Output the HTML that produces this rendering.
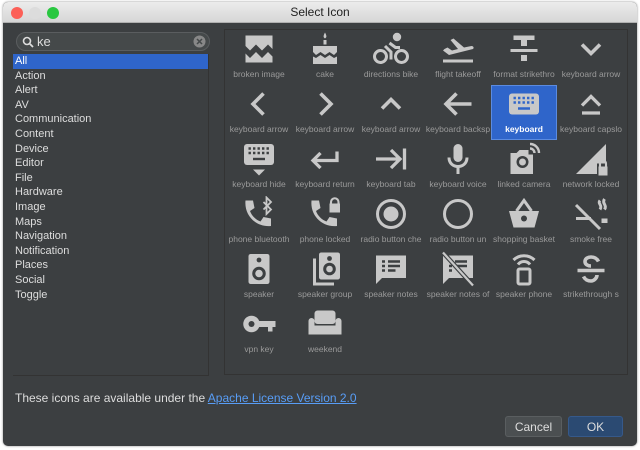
<!DOCTYPE html>
<html><head><meta charset="utf-8"><style>
*{margin:0;padding:0;box-sizing:border-box}
body{width:640px;height:450px;background:#fff;position:relative;overflow:hidden;font-family:"Liberation Sans",sans-serif}
.win{position:absolute;left:3px;top:2px;width:634px;height:444px;background:#3c3f41;border-radius:5px;overflow:hidden;box-shadow:0 0 2px #888}
.title{height:21px;background:linear-gradient(#ececec,#d6d6d6);border-bottom:1px solid #b0b0b0;text-align:center;font-size:12px;line-height:21px;color:#222}
.dot{position:absolute;top:5px;width:12px;height:12px;border-radius:50%}
.search{position:absolute;left:13px;top:30px;width:194px;height:19px;border:1px solid #5a5d5f;border-radius:10px;background:#45494a;color:#ddd;font-size:13px;line-height:17px;padding-left:20px}
.list{position:absolute;left:10px;top:52px;width:196px;height:322px;background:#3c3f41;border-right:1px solid #333;border-bottom:1px solid #333}
.list div{height:14.6px;font-size:11px;line-height:14.6px;color:#ddd;padding-left:2px}
.list .sel{background:#2f65ca;color:#fff}
.grid{position:absolute;left:221px;top:27px;width:404px;height:346px;border:1px solid #333;background:#3c3f41}
.cell{position:absolute;width:66px;height:55px;text-align:center}
.cell svg{position:absolute;left:15px;top:1px;width:36px;height:36px}
.cell span{position:absolute;left:0;right:0;top:39px;font-size:8.5px;color:#9a9a9a;white-space:nowrap;overflow:hidden}
.cell.on{background:#2f65ca;border:1px solid #5b8be0}
.cell.on svg{left:14px;top:0}
.cell.on span{color:#fff;font-weight:bold;top:38px}
.foot{position:absolute;left:12px;top:389px;font-size:12px;color:#ddd}
.foot a{color:#589df6;text-decoration:underline}
.btn{position:absolute;top:414px;height:21px;border-radius:3px;font-size:12px;color:#ddd;text-align:center;line-height:21px}
</style></head><body>
<div class="win">
<div class="title">Select Icon</div>
<div class="dot" style="left:8px;background:#fc5f57"></div>
<div class="dot" style="left:26px;background:#dcdcdc"></div>
<div class="dot" style="left:44px;background:#29c740"></div>
<div class="search"><svg style="position:absolute;left:5px;top:3px" width="12" height="12" viewBox="0 0 12 12"><circle cx="5" cy="5" r="3.5" fill="none" stroke="#ddd" stroke-width="1.6"/><path d="M7.5 7.5L11 11" stroke="#ddd" stroke-width="1.8"/></svg>ke<svg style="position:absolute;right:3px;top:2px" width="13" height="13" viewBox="0 0 13 13"><circle cx="6.5" cy="6.5" r="6" fill="#888"/><path d="M4 4l5 5M9 4l-5 5" stroke="#45494a" stroke-width="1.5"/></svg></div>
<div class="list">
<div class="sel">All</div><div>Action</div><div>Alert</div><div>AV</div><div>Communication</div><div>Content</div><div>Device</div><div>Editor</div><div>File</div><div>Hardware</div><div>Image</div><div>Maps</div><div>Navigation</div><div>Notification</div><div>Places</div><div>Social</div><div>Toggle</div>
</div>
<div class="grid" id="g">
<div class="cell" style="left:1px;top:0"><svg viewBox="0 0 24 24" fill="#c8c8c8"><path d="M3 3h18v9l-3-3-4 4-4-4-4 4-3-3zM3 15l3 3 4-4 4 4 4-4 3 3v4H3z"/></svg><span>broken image</span></div>
<div class="cell" style="left:67px;top:0"><svg viewBox="0 0 24 24" fill="#c8c8c8"><path d="M12 1c1 2 1.5 3 0 4-1.5-1-1-2 0-4zM11 6h2v3h-2zM4 10h16v4l-2 2-3-2-3 2-3-2-3 2-2-2zM4 17l2 1 3-2 3 2 3-2 3 2 2-1v5H4z"/></svg><span>cake</span></div>
<div class="cell" style="left:133px;top:0"><svg viewBox="0 0 24 24" fill="none" stroke="#c8c8c8" stroke-width="2"><circle cx="5" cy="17" r="4"/><circle cx="19" cy="17" r="4"/><path d="M8 10l4 4v5M11 8l4 3h3"/><circle cx="16" cy="4" r="1.8" fill="#c8c8c8"/></svg><span>directions bike</span></div>
<div class="cell" style="left:200px;top:0"><svg viewBox="0 0 24 24" fill="#c8c8c8"><path d="M2 19h20v2H2zM3 12l2-1 3 2 4-1-5-6 2-1 7 6 5-1c1 0 2 1 1 2l-16 4-4-3z"/></svg><span>flight takeoff</span></div>
<div class="cell" style="left:266px;top:0"><svg viewBox="0 0 24 24" fill="#c8c8c8"><path d="M5 3h14v3h-5v4h-4V6H5zM3 12h18v2H3zM10 16h4v4h-4z"/></svg><span>format strikethro</span></div>
<div class="cell" style="left:333px;top:0"><svg viewBox="0 0 24 24" fill="none" stroke="#c8c8c8" stroke-width="2.4"><path d="M6 9l6 6 6-6"/></svg><span>keyboard arrow</span></div>
<div class="cell" style="left:1px;top:55px"><svg viewBox="0 0 24 24" fill="none" stroke="#c8c8c8" stroke-width="2.4"><path d="M15 5l-7 7 7 7"/></svg><span>keyboard arrow</span></div>
<div class="cell" style="left:67px;top:55px"><svg viewBox="0 0 24 24" fill="none" stroke="#c8c8c8" stroke-width="2.4"><path d="M9 5l7 7-7 7"/></svg><span>keyboard arrow</span></div>
<div class="cell" style="left:133px;top:55px"><svg viewBox="0 0 24 24" fill="none" stroke="#c8c8c8" stroke-width="2.4"><path d="M6 15l6-6 6 6"/></svg><span>keyboard arrow</span></div>
<div class="cell" style="left:200px;top:55px"><svg viewBox="0 0 24 24" fill="none" stroke="#c8c8c8" stroke-width="2.4"><path d="M21 12H4M11 5l-7 7 7 7"/></svg><span>keyboard backsp</span></div>
<div class="cell on" style="left:266px;top:55px"><svg viewBox="0 0 24 24"><rect x="2" y="5" width="20" height="14" rx="2" fill="#c8c8c8"/><path d="M5 8h14M5 11h14" stroke="#2f65ca" stroke-width="1.6" stroke-dasharray="1.6 1.4"/><path d="M8 15h8" stroke="#2f65ca" stroke-width="1.6"/></svg><span>keyboard</span></div>
<div class="cell" style="left:333px;top:55px"><svg viewBox="0 0 24 24" fill="none" stroke="#c8c8c8" stroke-width="2.2"><path d="M6 13l6-6 6 6M6 18h12"/></svg><span>keyboard capslo</span></div>
<div class="cell" style="left:1px;top:110px"><svg viewBox="0 0 24 24"><rect x="2" y="2" width="20" height="14" rx="2" fill="#c8c8c8"/><path d="M5 5h14M5 8h14" stroke="#3c3f41" stroke-width="1.6" stroke-dasharray="1.6 1.4"/><path d="M8 12h8" stroke="#3c3f41" stroke-width="1.6"/><path d="M8 19h8l-4 4z" fill="#c8c8c8"/></svg><span>keyboard hide</span></div>
<div class="cell" style="left:67px;top:110px"><svg viewBox="0 0 24 24" fill="none" stroke="#c8c8c8" stroke-width="2.2"><path d="M20 7v6H4M9 8l-5 5 5 5"/></svg><span>keyboard return</span></div>
<div class="cell" style="left:133px;top:110px"><svg viewBox="0 0 24 24" fill="none" stroke="#c8c8c8" stroke-width="2.2"><path d="M2 12h16M12 6l6 6-6 6M21 5v14"/></svg><span>keyboard tab</span></div>
<div class="cell" style="left:200px;top:110px"><svg viewBox="0 0 24 24" fill="#c8c8c8"><rect x="9" y="2" width="6" height="12" rx="3"/><path d="M6 11c0 4 3 6 6 6s6-2 6-6" fill="none" stroke="#c8c8c8" stroke-width="2"/><rect x="11" y="17" width="2" height="5"/></svg><span>keyboard voice</span></div>
<div class="cell" style="left:266px;top:110px"><svg viewBox="0 0 24 24"><path d="M3 8h4l2-2h6v3h3v13H3z" fill="#c8c8c8"/><circle cx="11" cy="14" r="4" fill="#3c3f41"/><circle cx="11" cy="14" r="2.3" fill="#c8c8c8"/><path d="M16 2a6 6 0 016 6M16 5a3 3 0 013 3" fill="none" stroke="#c8c8c8" stroke-width="1.6"/></svg><span>linked camera</span></div>
<div class="cell" style="left:333px;top:110px"><svg viewBox="0 0 24 24" fill="#c8c8c8"><path d="M22 2L2 22h14v-7h6z"/><rect x="17" y="17" width="6" height="6"/><path d="M18 17v-2a2 2 0 014 0v2" fill="none" stroke="#c8c8c8" stroke-width="1.4"/></svg><span>network locked</span></div>
<div class="cell" style="left:1px;top:165px"><svg viewBox="0 0 24 24" fill="#c8c8c8"><path d="M3 3h5l1 5-3 2c1 3 4 6 7 7l2-3 5 1v5c-10 1-18-7-17-17z"/><path d="M15 4l5 5-3 3V1l3 3-5 5" fill="none" stroke="#c8c8c8" stroke-width="1.2"/></svg><span>phone bluetooth</span></div>
<div class="cell" style="left:67px;top:165px"><svg viewBox="0 0 24 24" fill="#c8c8c8"><path d="M3 3h5l1 5-3 2c1 3 4 6 7 7l2-3 5 1v5c-10 1-18-7-17-17z"/><rect x="15" y="5" width="7" height="6"/><path d="M16 5V4a2.5 2.5 0 015 0v1" fill="none" stroke="#c8c8c8" stroke-width="1.4"/></svg><span>phone locked</span></div>
<div class="cell" style="left:133px;top:165px"><svg viewBox="0 0 24 24"><circle cx="12" cy="12" r="9" fill="none" stroke="#c8c8c8" stroke-width="2"/><circle cx="12" cy="12" r="5" fill="#c8c8c8"/></svg><span>radio button che</span></div>
<div class="cell" style="left:200px;top:165px"><svg viewBox="0 0 24 24"><circle cx="12" cy="12" r="9" fill="none" stroke="#c8c8c8" stroke-width="2"/></svg><span>radio button un</span></div>
<div class="cell" style="left:266px;top:165px"><svg viewBox="0 0 24 24"><path d="M2 10h20l-3 11H5z" fill="#c8c8c8"/><path d="M7 10l5-7 5 7" fill="none" stroke="#c8c8c8" stroke-width="2"/><circle cx="12" cy="15" r="2" fill="#3c3f41"/></svg><span>shopping basket</span></div>
<div class="cell" style="left:333px;top:165px"><svg viewBox="0 0 24 24" fill="none" stroke="#c8c8c8" stroke-width="2"><path d="M2 6l16 16M2 15h10M20 15v3M22 15v3M18 3c-2 2 2 3 0 6M21 2c-2 3 2 4 0 7"/></svg><span>smoke free</span></div>
<div class="cell" style="left:1px;top:220px"><svg viewBox="0 0 24 24"><rect x="5" y="2" width="14" height="20" rx="1.5" fill="#c8c8c8"/><circle cx="12" cy="6" r="1.6" fill="#3c3f41"/><circle cx="12" cy="15" r="3.5" fill="none" stroke="#3c3f41" stroke-width="2"/></svg><span>speaker</span></div>
<div class="cell" style="left:67px;top:220px"><svg viewBox="0 0 24 24"><rect x="8" y="1" width="14" height="18" rx="1.5" fill="#c8c8c8"/><circle cx="15" cy="5" r="1.6" fill="#3c3f41"/><circle cx="15" cy="12" r="3.2" fill="none" stroke="#3c3f41" stroke-width="2"/><path d="M5 5v17h13" fill="none" stroke="#c8c8c8" stroke-width="2"/></svg><span>speaker group</span></div>
<div class="cell" style="left:133px;top:220px"><svg viewBox="0 0 24 24"><path d="M2 3h20v15H6l-4 4z" fill="#c8c8c8"/><path d="M6 7h2M6 10h2M6 13h2M10 7h8M10 10h8M10 13h5" stroke="#3c3f41" stroke-width="1.6"/></svg><span>speaker notes</span></div>
<div class="cell" style="left:200px;top:220px"><svg viewBox="0 0 24 24"><path d="M2 3h20v15H6l-4 4z" fill="#c8c8c8"/><path d="M10 7h8M10 10h8M6 10h2M6 13h2" stroke="#3c3f41" stroke-width="1.6"/><path d="M2 1l20 22" stroke="#3c3f41" stroke-width="3"/><path d="M2 1l20 22" stroke="#c8c8c8" stroke-width="1.5"/></svg><span>speaker notes of</span></div>
<div class="cell" style="left:266px;top:220px"><svg viewBox="0 0 24 24" fill="none" stroke="#c8c8c8" stroke-width="2"><path d="M5 6a10 10 0 0114 0M8 9a5 5 0 018 0"/><rect x="8" y="12" width="8" height="10" rx="1"/></svg><span>speaker phone</span></div>
<div class="cell" style="left:333px;top:220px"><svg viewBox="0 0 24 24" fill="none" stroke="#c8c8c8" stroke-width="2.4"><path d="M3 13h18M17 7c-1-2-3-3-5-3s-4 1-4 3 2 3 4 3M16 16c0 2-2 4-4 4s-4-1-5-3"/></svg><span>strikethrough s</span></div>
<div class="cell" style="left:1px;top:275px"><svg viewBox="0 0 24 24"><circle cx="7" cy="12" r="5.5" fill="#c8c8c8"/><circle cx="7" cy="12" r="2" fill="#3c3f41"/><path d="M11 10h12v4h-2v3h-3v-3h-7z" fill="#c8c8c8"/></svg><span>vpn key</span></div>
<div class="cell" style="left:67px;top:275px"><svg viewBox="0 0 24 24" fill="#c8c8c8"><rect x="5" y="3" width="14" height="9" rx="2"/><path d="M1 10a2 2 0 014 0v3h14v-3a2 2 0 014 0v9H1z"/></svg><span>weekend</span></div>
</div>
<div class="foot">These icons are available under the <a>Apache License Version 2.0</a></div>
<div class="btn" style="left:502px;width:57px;background:#4b4f51;border:1px solid #5a5e60">Cancel</div>
<div class="btn" style="left:565px;width:55px;background:#2b4a72;border:1px solid #36598a">OK</div>
</div>
</body></html>
